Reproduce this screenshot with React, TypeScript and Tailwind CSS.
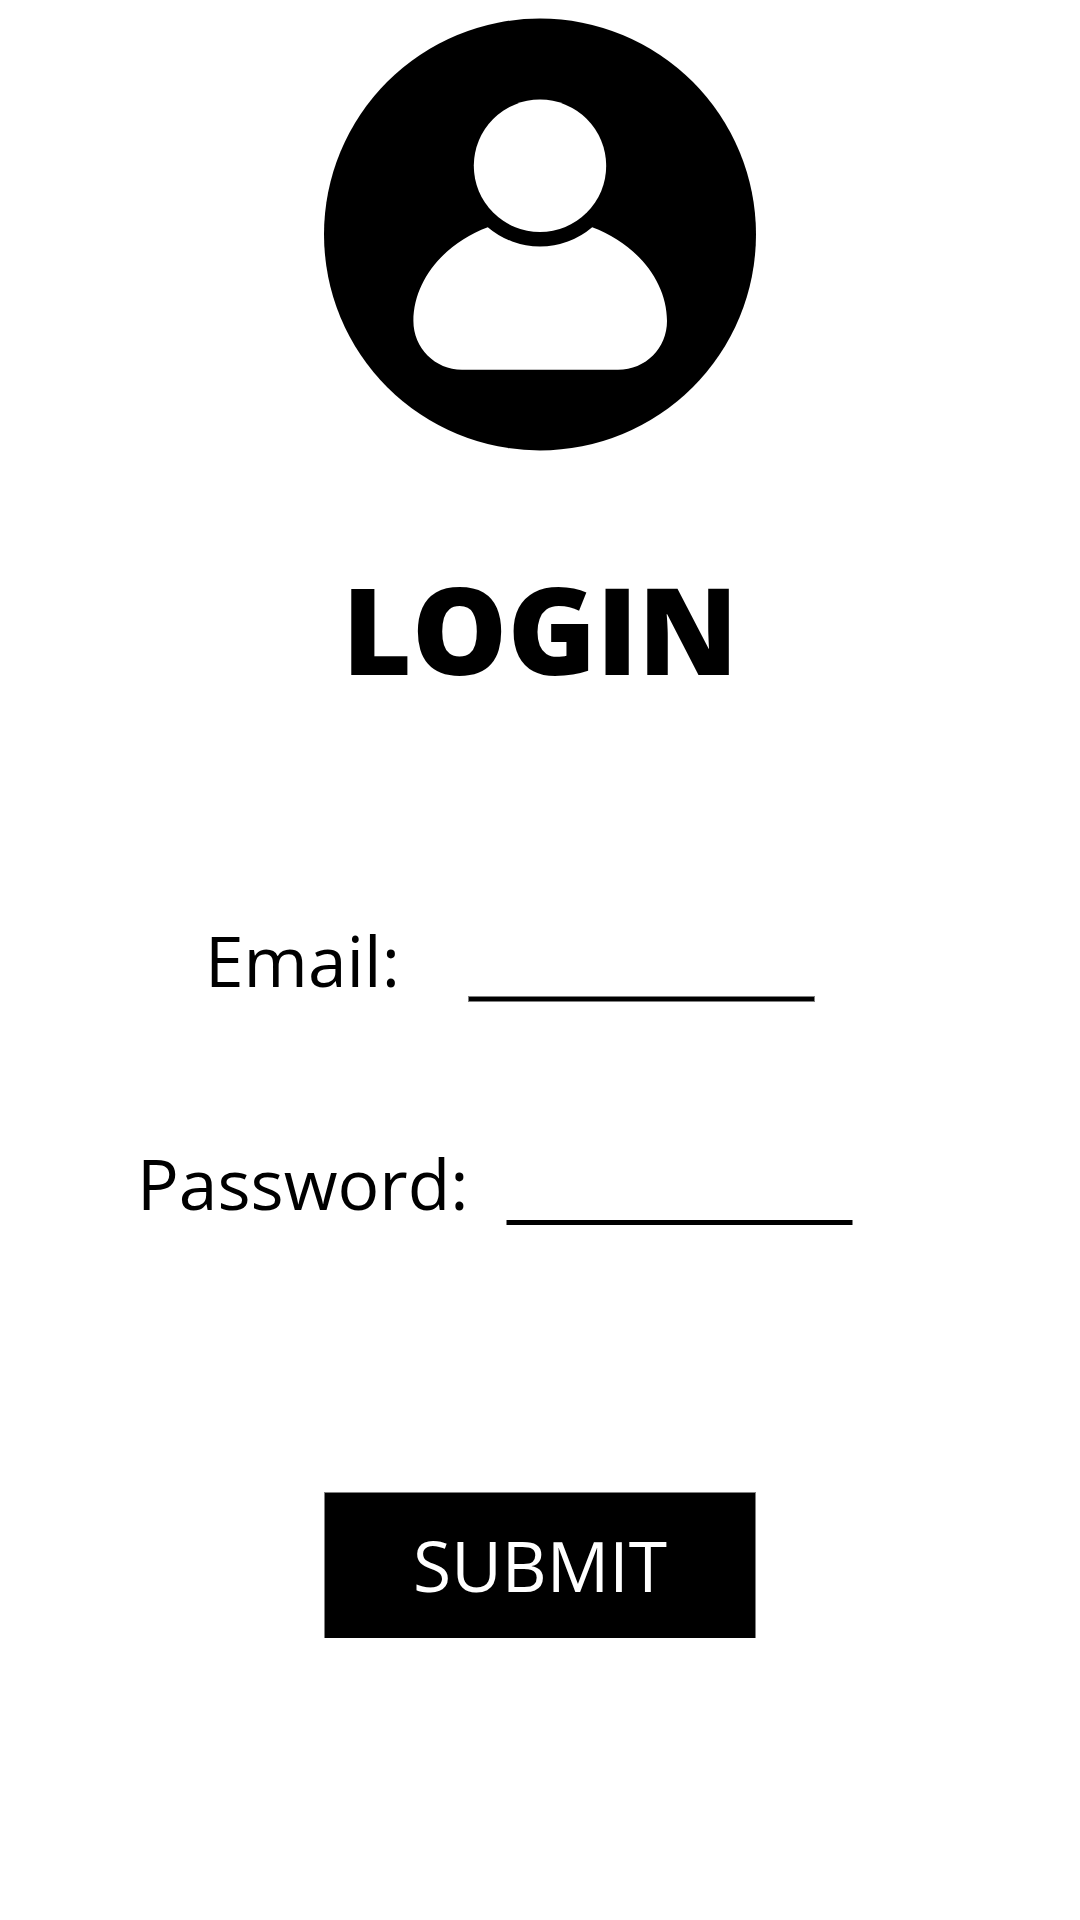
export default function App() {
  return (
    <main className="flex h-[1920px] w-[1080px] flex-col overflow-hidden bg-white font-['Open_Sans',sans-serif] text-black">
      <svg className="mt-[18px] ml-[324px] h-[433px] w-[432px] shrink-0" viewBox="324 18 432 433" aria-hidden="true">
        <circle cx="540" cy="234.5" r="216" fill="black" />
        <circle cx="540" cy="165.8" r="66.2" fill="white" />
        <path fill="white" d="M487.8 227.2A80.3 80.3 0 0 0 592.2 227.2C635 243 667 280 667 321C667 348 646 369.7 618 369.7H462C435 369.7 413.4 348 413.4 321C413.4 280 445 243 487.8 227.2Z" />
      </svg>
      <h1 className="mt-[96px] text-center text-[120px] leading-[164px] font-extrabold">LOGIN</h1>
      <div className="mt-[201px] ml-[205px] flex h-[96px]">
        <label className="w-[263px] text-[69.5px] leading-[96px]">Email:</label>
        <div className="mt-[84px] h-[6px] w-[347px] border border-[#808080] bg-black" />
      </div>
      <div className="mt-[127px] ml-[137px] flex h-[96px]">
        <label className="w-[369px] text-[69.5px] leading-[96px]">Password:</label>
        <div className="mt-[85px] h-[5px] w-[347px] border-x border-[#808080] bg-black" />
      </div>
      <button className="mt-[261px] ml-[324px] h-[146px] w-[432px] border-x border-t border-[#808080] bg-black text-[69.5px] leading-[145px] text-white">SUBMIT</button>
    </main>
  );
}
